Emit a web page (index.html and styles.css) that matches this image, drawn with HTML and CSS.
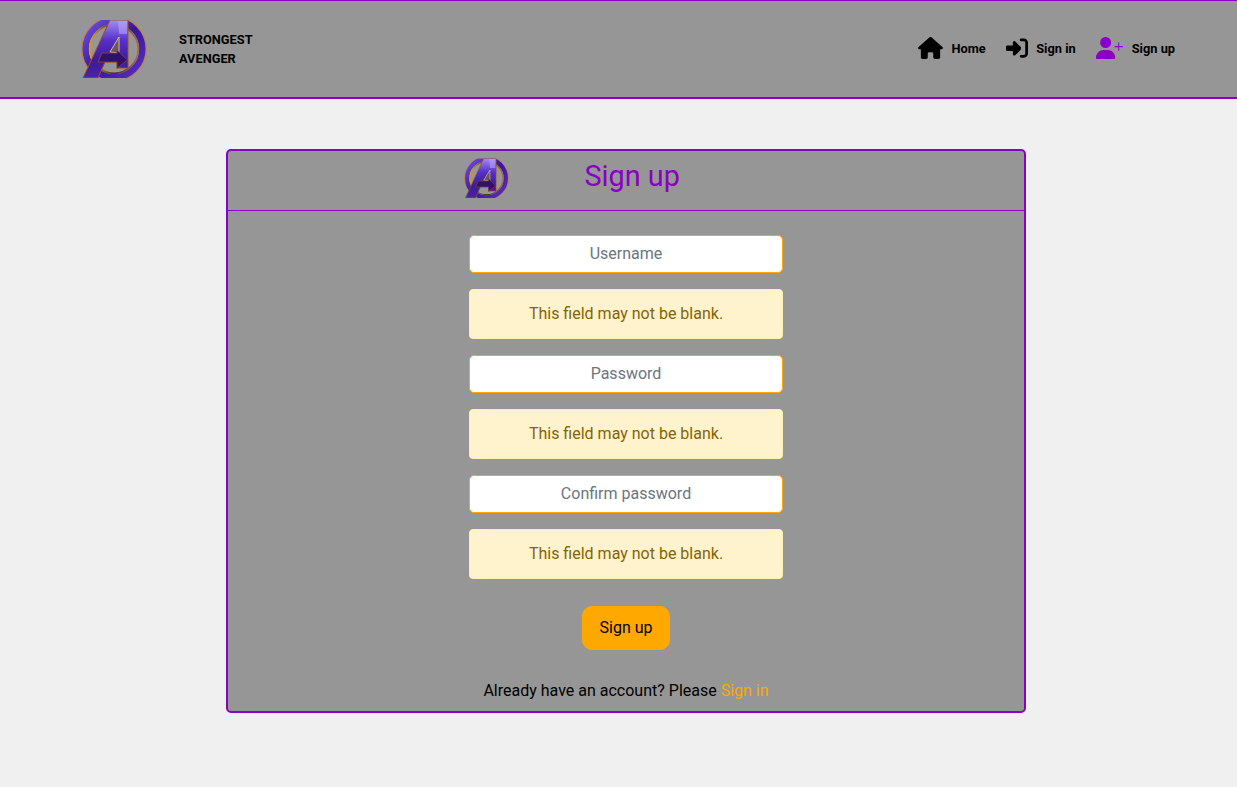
FILE: index.html
```html
<!DOCTYPE html>
<html lang="en">
<head>
<meta charset="utf-8">
<title>Sign up</title>
<link rel="stylesheet" href="styles.css">
</head>
<body>
<svg class="defs" width="0" height="0" aria-hidden="true">
  <defs>
    <linearGradient id="ringGrad" x1="0" y1="0" x2="1" y2="1">
      <stop offset="0" stop-color="#6f52dc"/>
      <stop offset="0.5" stop-color="#3516a0"/>
      <stop offset="1" stop-color="#5a30c0"/>
    </linearGradient>
    <linearGradient id="goldGrad" x1="0" y1="0" x2="1" y2="0">
      <stop offset="0" stop-color="#e0a010"/>
      <stop offset="0.5" stop-color="#4a3020"/>
      <stop offset="1" stop-color="#b06a40"/>
    </linearGradient>
    <linearGradient id="aGrad" x1="0" y1="0" x2="0" y2="1">
      <stop offset="0" stop-color="#a48cf4"/>
      <stop offset="0.35" stop-color="#5630c8"/>
      <stop offset="0.7" stop-color="#3c1a98"/>
      <stop offset="1" stop-color="#4a24a8"/>
    </linearGradient>
    <clipPath id="logoClip"><rect x="0" y="0" width="66" height="58"/></clipPath>
    <symbol id="logo" viewBox="0 0 66 59">
      <g clip-path="url(#logoClip)">
        <circle cx="33" cy="29" r="32" fill="none" stroke="#d07a38" stroke-width="1.200"/>
        <circle cx="33" cy="29" r="28.300" fill="none" stroke="url(#ringGrad)" stroke-width="6.500"/>
        <circle cx="33" cy="29" r="24.300" fill="none" stroke="url(#goldGrad)" stroke-width="1.800"/>
        <path d="M29 0H47V48H36V42H24L17 58H2Z" fill="url(#aGrad)" stroke="#a04e20" stroke-width="1"/>
        <path d="M38 17L29 32L38 33Z" fill="#6e5660" stroke="#d8b8a0" stroke-width="1"/>
        <path d="M21 33H36V30L46.500 40L36 48.500V42H17Z" fill="#30126c" stroke="#8a4a38" stroke-width="0.800"/>
        <path d="M37 1H46V14H38Z" fill="#c0aef8" opacity="0.500"/>
      </g>
    </symbol>
  </defs>
</svg>

<header class="topbar">
  <div class="brand">
    <svg class="brand-logo"><use href="#logo"/></svg>
    <div class="brand-name">STRONGEST<br>AVENGER</div>
  </div>
  <nav class="nav">
    <a class="nav-item" href="#">
      <svg class="icon icon-home" viewBox="0 0 576 512"><path d="M575.800 255.500c0 18-15 32.100-32 32.100h-32l.7 160.200c0 2.700-.2 5.400-.5 8.100V472c0 22.100-17.900 40-40 40H456c-1.100 0-2.200 0-3.300-.1c-1.400 .1-2.800 .1-4.200 .1H416 392c-22.100 0-40-17.900-40-40V448 384c0-17.700-14.300-32-32-32H256c-17.700 0-32 14.300-32 32v64 24c0 22.100-17.900 40-40 40H160 128.100c-1.500 0-3-.1-4.500-.2c-1.200 .1-2.400 .2-3.600 .2H104c-22.100 0-40-17.900-40-40V360c0-.9 0-1.900 .1-2.800V287.600H32c-18 0-32-14-32-32.100c0-9 3-17 10-24L266.400 8c7-7 15-8 22-8s15 2 21 7L564.800 231.500c8 7 12 15 11 24z"/></svg>
      <span>Home</span>
    </a>
    <a class="nav-item" href="#">
      <svg class="icon icon-in" viewBox="0 0 512 512"><path d="M352 96l64 0c17.700 0 32 14.300 32 32l0 256c0 17.700-14.300 32-32 32l-64 0c-17.700 0-32 14.300-32 32s14.300 32 32 32l64 0c53 0 96-43 96-96l0-256c0-53-43-96-96-96l-64 0c-17.700 0-32 14.300-32 32s14.300 32 32 32zm-9.400 182.600c12.500-12.500 12.500-32.800 0-45.300l-128-128c-9.200-9.200-22.900-11.900-34.900-6.900s-19.800 16.600-19.800 29.600l0 72-128 0c-17.700 0-32 14.300-32 32l0 64c0 17.700 14.300 32 32 32l128 0 0 72c0 12.900 7.800 24.600 19.800 29.600s25.700 2.300 34.900-6.900l128-128z"/></svg>
      <span>Sign in</span>
    </a>
    <a class="nav-item" href="#">
      <svg class="icon icon-user" viewBox="0 0 640 512"><path d="M96 128a128 128 0 1 1 256 0A128 128 0 1 1 96 128zM0 482.300C0 383.800 79.800 304 178.300 304h91.400C368.200 304 448 383.800 448 482.300c0 16.400-13.300 29.700-29.700 29.700H29.700C13.300 512 0 498.700 0 482.300zM516 312V236H440c-6.600 0-12-5.400-12-12s5.400-12 12-12h76V136c0-6.600 5.400-12 12-12s12 5.400 12 12v76h76c6.600 0 12 5.400 12 12s-5.400 12-12 12H540v76c0 6.600-5.400 12-12 12s-12-5.400-12-12z"/></svg>
      <span>Sign up</span>
    </a>
  </nav>
</header>

<main class="page">
  <section class="card">
    <div class="card-head">
      <svg class="card-logo"><use href="#logo"/></svg>
      <h1 class="card-title">Sign up</h1>
    </div>
    <form class="form">
      <input class="field" type="text" placeholder="Username">
      <div class="alert">This field may not be blank.</div>
      <input class="field" type="password" placeholder="Password">
      <div class="alert">This field may not be blank.</div>
      <input class="field" type="password" placeholder="Confirm password">
      <div class="alert">This field may not be blank.</div>
      <button class="submit" type="button">Sign up</button>
      <p class="switch">Already have an account? Please <a class="switch-link" href="#">Sign in</a></p>
    </form>
  </section>
</main>
</body>
</html>
```
FILE: styles.css
```css
* {
  box-sizing: border-box;
}

html,
body {
  height: 100%;
}

body {
  margin: 0;
  background: #f0f0f0;
  color: #000;
  font-family: Roboto, "Liberation Sans", sans-serif;
  font-size: 16px;
  overflow: hidden;
}

.defs {
  display: block;
  height: 0;
}

.topbar {
  display: flex;
  align-items: center;
  justify-content: space-between;
  height: 99px;
  padding: 0 62px 0 81px;
  background: #969696;
  border-top: 1px solid #8a00c4;
  border-bottom: 2px solid #8a00c4;
}

.brand {
  display: flex;
  align-items: center;
  gap: 32px;
}

.brand-logo {
  display: block;
  width: 66px;
  height: 59px;
}

.brand-name {
  font-size: 12.8px;
  font-weight: 700;
  line-height: 19px;
  margin-bottom: 1px;
}

.nav {
  display: flex;
  align-items: center;
  gap: 20.500px;
  margin-bottom: 2px;
}

.nav-item {
  display: flex;
  align-items: center;
  gap: 8px;
  color: #000;
  font-size: 12.8px;
  font-weight: 700;
  text-decoration: none;
}

.icon {
  display: block;
  height: 22px;
}

.icon-home {
  width: 25px;
}

.icon-in {
  width: 22px;
}

.icon-user {
  width: 27.500px;
  fill: #8a00c4;
}

.page {
  display: flex;
  justify-content: center;
  padding: 50px 0 0 15px;
}

.card {
  width: 800px;
  height: 564px;
  background: #969696;
  border: 2px solid #8a00c4;
  border-radius: 5px;
}

.card-head {
  display: flex;
  align-items: flex-start;
  gap: 76px;
  height: 60px;
  padding: 7px 0 0 235.500px;
  border-bottom: 1px solid #8a00c4;
}

.card-logo {
  display: block;
  width: 45px;
  height: 41px;
}

.card-title {
  margin: 1px 0 0;
  color: #8a00c4;
  font-size: 28.800px;
  font-weight: 400;
  line-height: 35px;
}

.form {
  display: flex;
  flex-direction: column;
  align-items: center;
  padding-top: 24px;
}

.field {
  display: block;
  width: 314px;
  height: 38px;
  margin-bottom: 16px;
  padding: 5px 12px 7px;
  background: #fff;
  border: 1px solid #ffa900;
  border-radius: 5px;
  color: #495057;
  font-family: inherit;
  font-size: 16px;
  text-align: center;
}

.field::placeholder {
  color: #6c757d;
  opacity: 1;
}

.alert {
  width: 314px;
  height: 50px;
  margin-bottom: 16px;
  background: #fff3cd;
  border: 1px solid #ffeeba;
  border-radius: 4px;
  color: #856404;
  line-height: 48px;
  text-align: center;
}

.submit {
  display: block;
  width: 88px;
  height: 44px;
  margin-top: 11px;
  padding: 0 0 2px;
  background: #ffa900;
  border: 1px solid #ffa900;
  border-radius: 10px;
  color: #000;
  font-family: inherit;
  font-size: 16px;
}

.switch {
  margin: 31px 0 0;
  line-height: 19px;
}

.switch-link {
  color: #ffa900;
  text-decoration: none;
}
```
